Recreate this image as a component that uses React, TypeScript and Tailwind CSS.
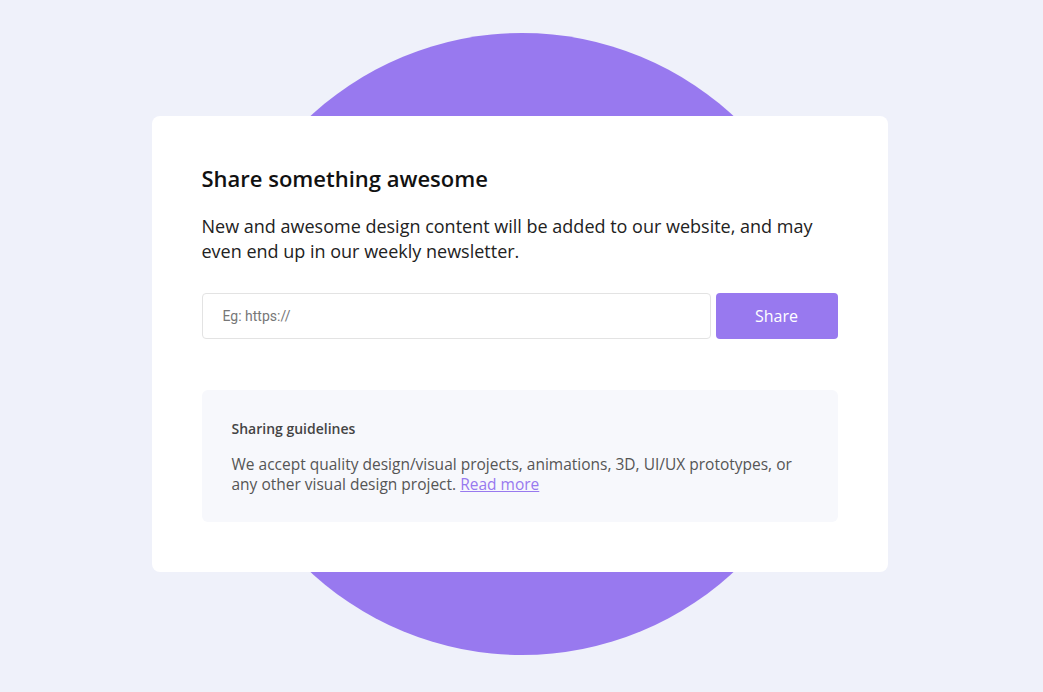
export default function App() {
  return (
    <div className="min-h-screen bg-[#eff1fa] grid place-items-center pb-[4px] font-['Open_Sans',sans-serif]">
      <div className="grid place-items-center">
        <div className="col-start-1 row-start-1 w-[622px] h-[622px] rounded-full bg-[#9879ef]" />
        <div className="col-start-1 row-start-1 relative mr-[4px] w-[736px] bg-white rounded-lg p-[50px]">
          <h1 className="text-[22px] leading-[24px] font-semibold text-[#111]">Share something awesome</h1>
          <p className="mt-[24px] text-[18px] leading-[25px] text-[#222]">
            New and awesome design content will be added to our website, and may even end up in our
            weekly newsletter.
          </p>
          <form className="mt-[29px] flex gap-[5px]" onSubmit={(e) => e.preventDefault()}>
            <input
              type="text"
              placeholder="Eg: https://"
              className="flex-1 h-[46px] rounded border border-[#e3e3e3] px-5 text-sm font-['Roboto',sans-serif] placeholder:text-[#777] outline-none"
            />
            <button className="w-[122px] h-[46px] rounded bg-[#9879ef] text-white text-[16px] font-medium">
              Share
            </button>
          </form>
          <div className="mt-[51px] bg-[#f7f8fc] rounded-md px-[30px] pt-[29px] pb-[28px]">
            <h2 className="text-sm leading-5 font-semibold text-[#444]">Sharing guidelines</h2>
            <p className="mt-[15px] text-[15.5px] leading-5 text-[#555]">
              We accept quality design/visual projects, animations, 3D, UI/UX prototypes, or any other
              visual design project.{" "}
              <a href="#" className="text-[#9879ef] underline">
                Read more
              </a>
            </p>
          </div>
        </div>
      </div>
    </div>
  );
}
